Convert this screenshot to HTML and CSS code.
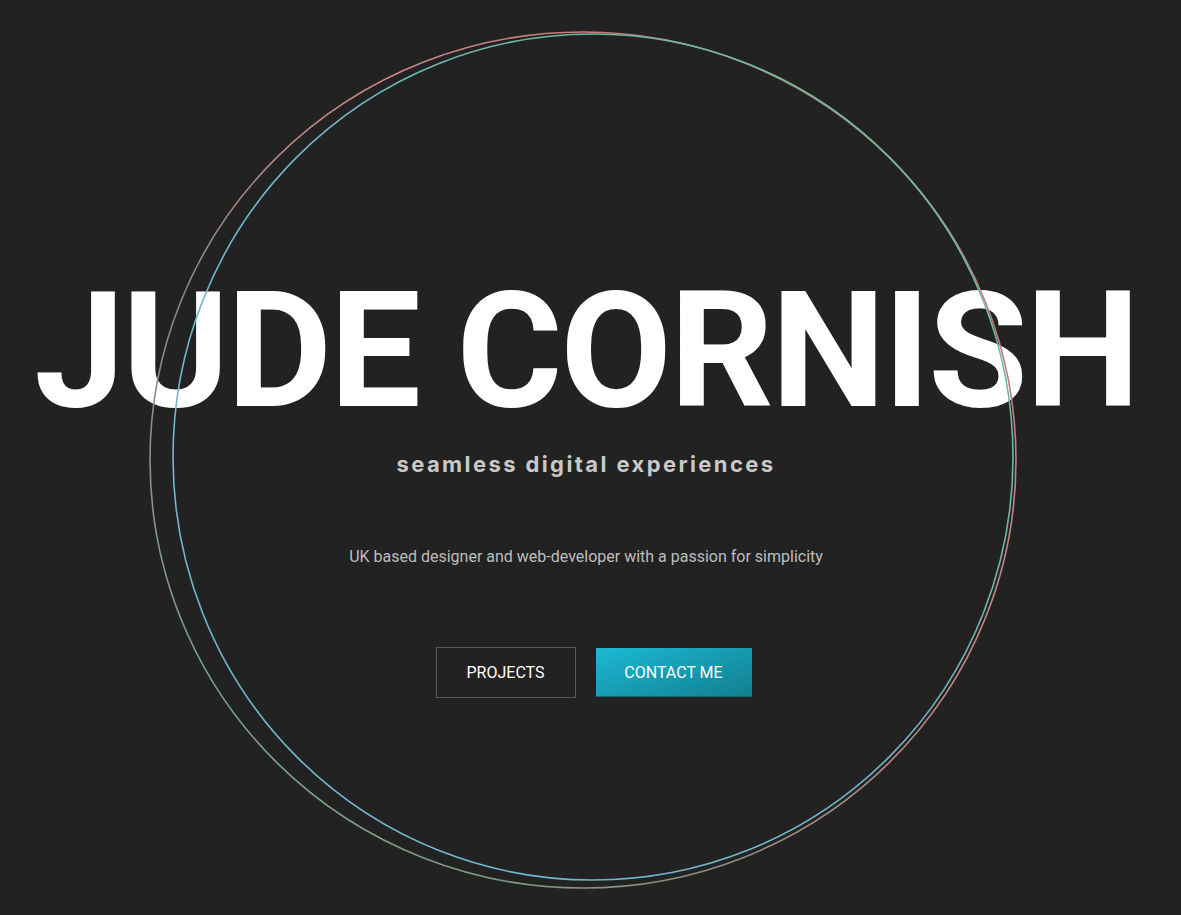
FILE: index.html
```html
<!DOCTYPE html>
<html lang="en">
<head>
<meta charset="utf-8">
<title>Jude Cornish</title>
<link rel="stylesheet" href="styles.css">
</head>
<body>
<main class="hero">
  <svg class="rings" width="1181" height="915" viewBox="0 0 1181 915" aria-hidden="true">
    <defs>
      <linearGradient id="gA" x1="0" y1="1" x2="1" y2="0">
        <stop offset="0" stop-color="#6fb08e"/>
        <stop offset="0.35" stop-color="#8a8a7a"/>
        <stop offset="0.6" stop-color="#c98585"/>
        <stop offset="1" stop-color="#c07070"/>
      </linearGradient>
      <linearGradient id="gB" x1="0" y1="1" x2="1" y2="0">
        <stop offset="0" stop-color="#72b8d0"/>
        <stop offset="0.5" stop-color="#70b4c8"/>
        <stop offset="0.75" stop-color="#6ab9a0"/>
        <stop offset="1" stop-color="#6fbf95"/>
      </linearGradient>
    </defs>
    <ellipse cx="583" cy="460" rx="433" ry="428" fill="none" stroke="url(#gA)" stroke-width="1.6"/>
    <ellipse cx="593" cy="457" rx="420" ry="423" fill="none" stroke="url(#gB)" stroke-width="1.6"/>
  </svg>
  <h1 class="title">JUDE CORNISH</h1>
  <p class="tagline">seamless digital experiences</p>
  <p class="intro">UK based designer and web-developer with a passion for simplicity</p>
  <div class="actions">
    <a class="btn btn-outline" href="#projects">PROJECTS</a>
    <a class="btn btn-fill" href="#contact">CONTACT ME</a>
  </div>
  <span class="scroll-hint" aria-hidden="true"></span>
</main>
</body>
</html>
```

FILE: styles.css
```css
* { box-sizing: border-box; }
html, body {
  margin: 0;
  padding: 0;
  background: #222222;
}
body {
  font-family: Roboto, "Liberation Sans", Arial, sans-serif;
  color: #fff;
  overflow: hidden;
}
.hero {
  position: relative;
  height: 915px;
  display: flex;
  flex-direction: column;
  align-items: center;
  padding-top: 270px;
  padding-right: 9px;
}
.rings {
  position: absolute;
  left: 0;
  top: 0;
  z-index: 2;
  pointer-events: none;
}
.title {
  margin: 0;
  font-family: Roboto, "Liberation Sans", sans-serif;
  font-weight: 700;
  font-size: 162px;
  line-height: 1;
  letter-spacing: -2.3px;
  white-space: nowrap;
  color: #ffffff;
}
.tagline {
  margin: 18px 0 0;
  font-family: Inter, Roboto, sans-serif;
  font-weight: 700;
  font-size: 22px;
  line-height: 28px;
  letter-spacing: 2.4px;
  color: #c9c9c9;
}
.intro {
  margin: 69px 0 0;
  font-size: 16px;
  line-height: 20px;
  color: #bdbdbd;
}
.actions {
  margin-top: 80px;
  margin-left: 15px;
  display: flex;
  gap: 20px;
  align-items: center;
}
.btn {
  display: flex;
  align-items: center;
  justify-content: center;
  height: 51px;
  font-size: 16px;
  color: #fff;
  text-decoration: none;
}
.btn-outline {
  width: 140px;
  border: 1px solid #5a5a5a;
}
.btn-fill {
  width: 156px;
  height: 49px;
  background: linear-gradient(160deg, #1bbad4 0%, #1596ab 60%, #12808f 100%);
  border-bottom: 1px solid #0f6b78;
}
.scroll-hint {
  position: absolute;
  left: 584px;
  top: 880px;
  width: 12px;
  height: 12px;
  border-right: 1px solid #333;
  border-bottom: 1px solid #333;
  transform: rotate(45deg);
}
```
